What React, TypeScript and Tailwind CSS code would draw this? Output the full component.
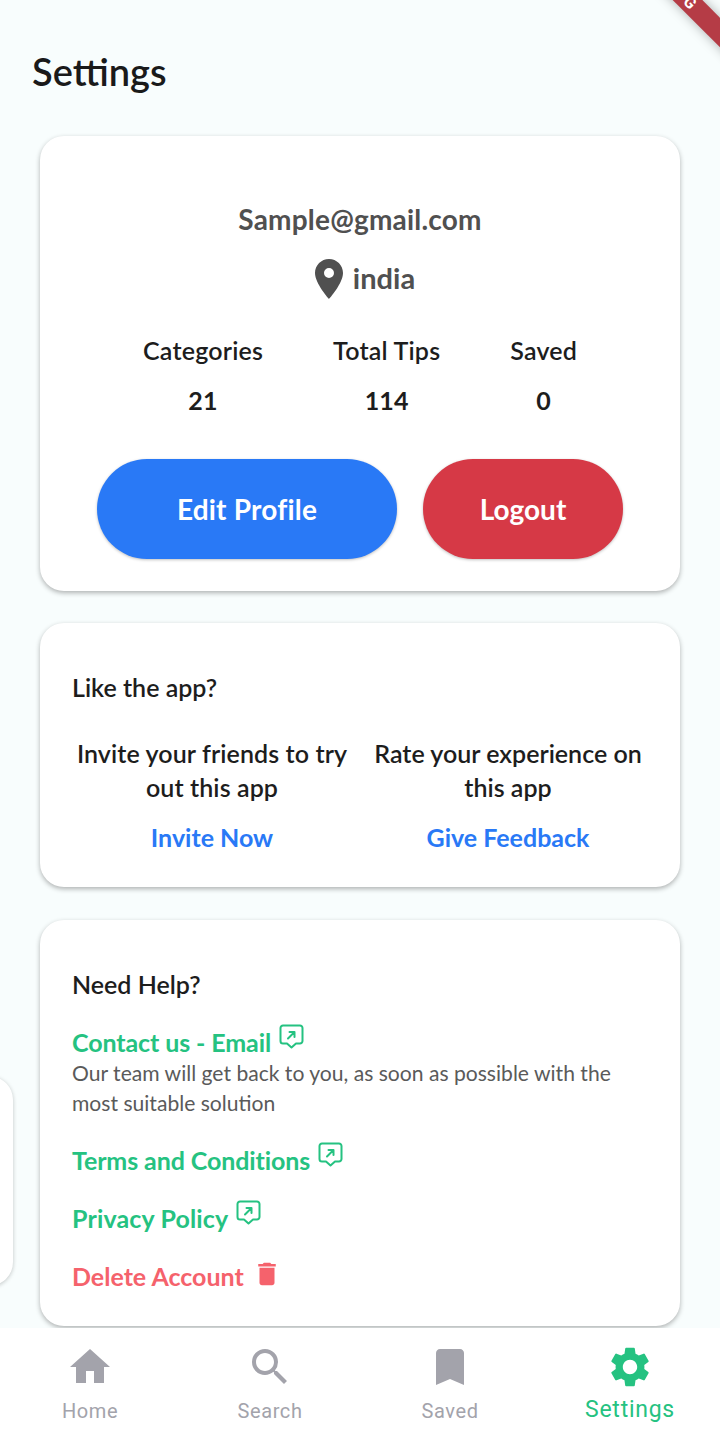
import React from 'react';
import { MdHome, MdSearch, MdBookmark, MdSettings, MdDelete, MdLocationOn } from 'react-icons/md';

const lato = { fontFamily: 'Lato, sans-serif' };

const LinkIcon = ({ className }: { className: string }) => (
  <svg viewBox="0 0 25 25" width="25" height="25" fill="none" stroke="currentColor" strokeWidth="2" strokeLinejoin="round" strokeLinecap="round" className={className}>
    <path d="M4 1.500h17a2.500 2.500 0 0 1 2.500 2.500v13a2.500 2.500 0 0 1-2.500 2.500h-4l-4.500 4-4.500-4H4A2.500 2.500 0 0 1 1.500 17V4A2.500 2.500 0 0 1 4 1.500z" />
    <path d="M9 14.500l6.500-6.500M10.500 8h5v5" />
  </svg>
);

const Stat = ({ label, value }: { label: string; value: string }) => (
  <div className="flex flex-col items-center gap-[17px]">
    <span className="text-[25px] leading-[33px] font-semibold tracking-[0.2px] text-[#1d1d1d]">{label}</span>
    <span className="text-[25px] leading-[33px] font-bold tracking-[0.2px] text-[#1d1d1d]">{value}</span>
  </div>
);

const HelpLink = ({ label, tracking }: { label: string; tracking: string }) => (
  <div className="flex items-start h-[34px]">
    <span className={`text-[25px] leading-[34px] font-bold text-[#25c281] ${tracking}`}>{label}</span>
    <LinkIcon className="ml-[8px] -mt-[1px] text-[#25c281]" />
  </div>
);

const NavItem = ({ icon, label, active }: { icon: React.ReactNode; label: string; active?: boolean }) => (
  <div className={`flex flex-col items-center w-[180px] ${active ? 'text-[#25c281]' : 'text-[#a3a3ab]'}`}>
    {icon}
    <span className={active ? 'mt-[4px] text-[23px] leading-[30px] tracking-[0.75px] font-[Roboto]' : 'mt-[6px] text-[20px] leading-[28px] tracking-[0.6px] font-[Roboto]'}>
      {label}
    </span>
  </div>
);

export default function App() {
  return (
    <div className="relative flex flex-col h-[1432px] w-[720px] overflow-hidden bg-[#f8fdfd]" style={lato}>
      {/* debug banner */}
      <div className="absolute top-[10px] right-[-48px] w-[120px] h-[21px] rotate-45 bg-[#b53c46] shadow-[0_0_12px_rgba(0,0,0,0.3)] flex items-center">
        <span className="ml-[29px] text-white text-[16px] leading-[21px] font-bold font-[Roboto]">G</span>
      </div>
      {/* card peeking in from the left */}
      <div className="absolute left-[-60px] top-[1076px] w-[73px] h-[210px] bg-white rounded-[24px] shadow-[0_1px_4px_rgba(0,0,0,0.22)]" />

      <main className="flex-1 min-h-0 overflow-hidden">
        <h1 className="pl-[32px] pt-[48px] text-[38px] leading-[46px] font-semibold text-[#1a1a1a]">Settings</h1>

        <section className="mx-[40px] mt-[42px] h-[455px] bg-white rounded-[24px] shadow-[0_2px_5px_rgba(0,0,0,0.3)] flex flex-col items-center pt-[65px]">
          <div className="text-[28px] leading-[36px] font-bold text-[#505050] tracking-[0.2px]">Sample@gmail.com</div>
          <div className="mt-[17px] flex items-center">
            <MdLocationOn size={48} className="text-[#505050] translate-y-[1px]" />
            <span className="text-[29px] leading-[38px] font-bold text-[#505050]">india</span>
          </div>
          <div className="mt-[32px] w-full pl-[103px] flex gap-[70px]">
            <Stat label="Categories" value="21" />
            <Stat label="Total Tips" value="114" />
            <Stat label="Saved" value="0" />
          </div>
          <div className="mt-[42px] flex gap-[26px]">
            <button className="w-[300px] h-[100px] rounded-[50px] bg-[#2979f6] text-white text-[28px] tracking-[0.2px] font-bold shadow-[0_1px_3px_rgba(0,0,0,0.25)]">Edit Profile</button>
            <button className="w-[200px] h-[100px] rounded-[50px] bg-[#d63946] text-white text-[28px] font-bold shadow-[0_1px_3px_rgba(0,0,0,0.25)]">Logout</button>
          </div>
        </section>

        <section className="mx-[40px] mt-[32px] h-[264px] bg-white rounded-[24px] shadow-[0_2px_5px_rgba(0,0,0,0.3)] pt-[47px] px-[32px]">
          <h2 className="text-[25px] leading-[34px] font-semibold text-[#1d1d1d]">Like the app?</h2>
          <div className="mt-[32px] flex">
            <div className="w-[280px] flex flex-col items-center text-center">
              <p className="text-[25px] leading-[34px] font-semibold tracking-[0.1px] text-[#1d1d1d]">Invite your friends to try<br />out this app</p>
              <a className="mt-[16px] text-[25px] leading-[34px] font-bold text-[#2979f6]">Invite Now</a>
            </div>
            <div className="ml-[16px] w-[280px] flex flex-col items-center text-center">
              <p className="text-[25px] leading-[34px] font-semibold text-[#1d1d1d]">Rate your experience on<br />this app</p>
              <a className="mt-[16px] text-[25px] leading-[34px] font-bold text-[#2979f6]">Give Feedback</a>
            </div>
          </div>
        </section>

        <section className="mx-[40px] mt-[33px] h-[406px] bg-white rounded-[24px] shadow-[0_2px_5px_rgba(0,0,0,0.3)] pt-[47px] px-[32px]">
          <h2 className="text-[25px] leading-[34px] font-semibold text-[#1d1d1d]">Need Help?</h2>
          <div className="mt-[24px]">
            <HelpLink label="Contact us - Email" tracking="tracking-[-0.1px]" />
            <p className="-mt-[1px] text-[21.1px] leading-[30px] text-[#5a5a5a]">Our team will get back to you, as soon as possible with the<br />most suitable solution</p>
          </div>
          <div className="mt-[25px]"><HelpLink label="Terms and Conditions" tracking="tracking-[-0.1px]" /></div>
          <div className="mt-[24px]"><HelpLink label="Privacy Policy" tracking="tracking-[0.15px]" /></div>
          <div className="mt-[24px] flex items-start">
            <span className="text-[25px] leading-[34px] font-bold text-[#f5626c]">Delete Account</span>
            <MdDelete size={30} className="ml-[8px] text-[#f5626c] translate-y-0" />
          </div>
        </section>
      </main>

      <nav className="h-[104px] shrink-0 bg-white flex pt-[15px]">
        <NavItem icon={<MdHome size={48} />} label="Home" />
        <NavItem icon={<MdSearch size={48} />} label="Search" />
        <NavItem icon={<MdBookmark size={48} />} label="Saved" />
        <NavItem icon={<MdSettings size={48} />} label="Settings" active />
      </nav>
    </div>
  );
}
